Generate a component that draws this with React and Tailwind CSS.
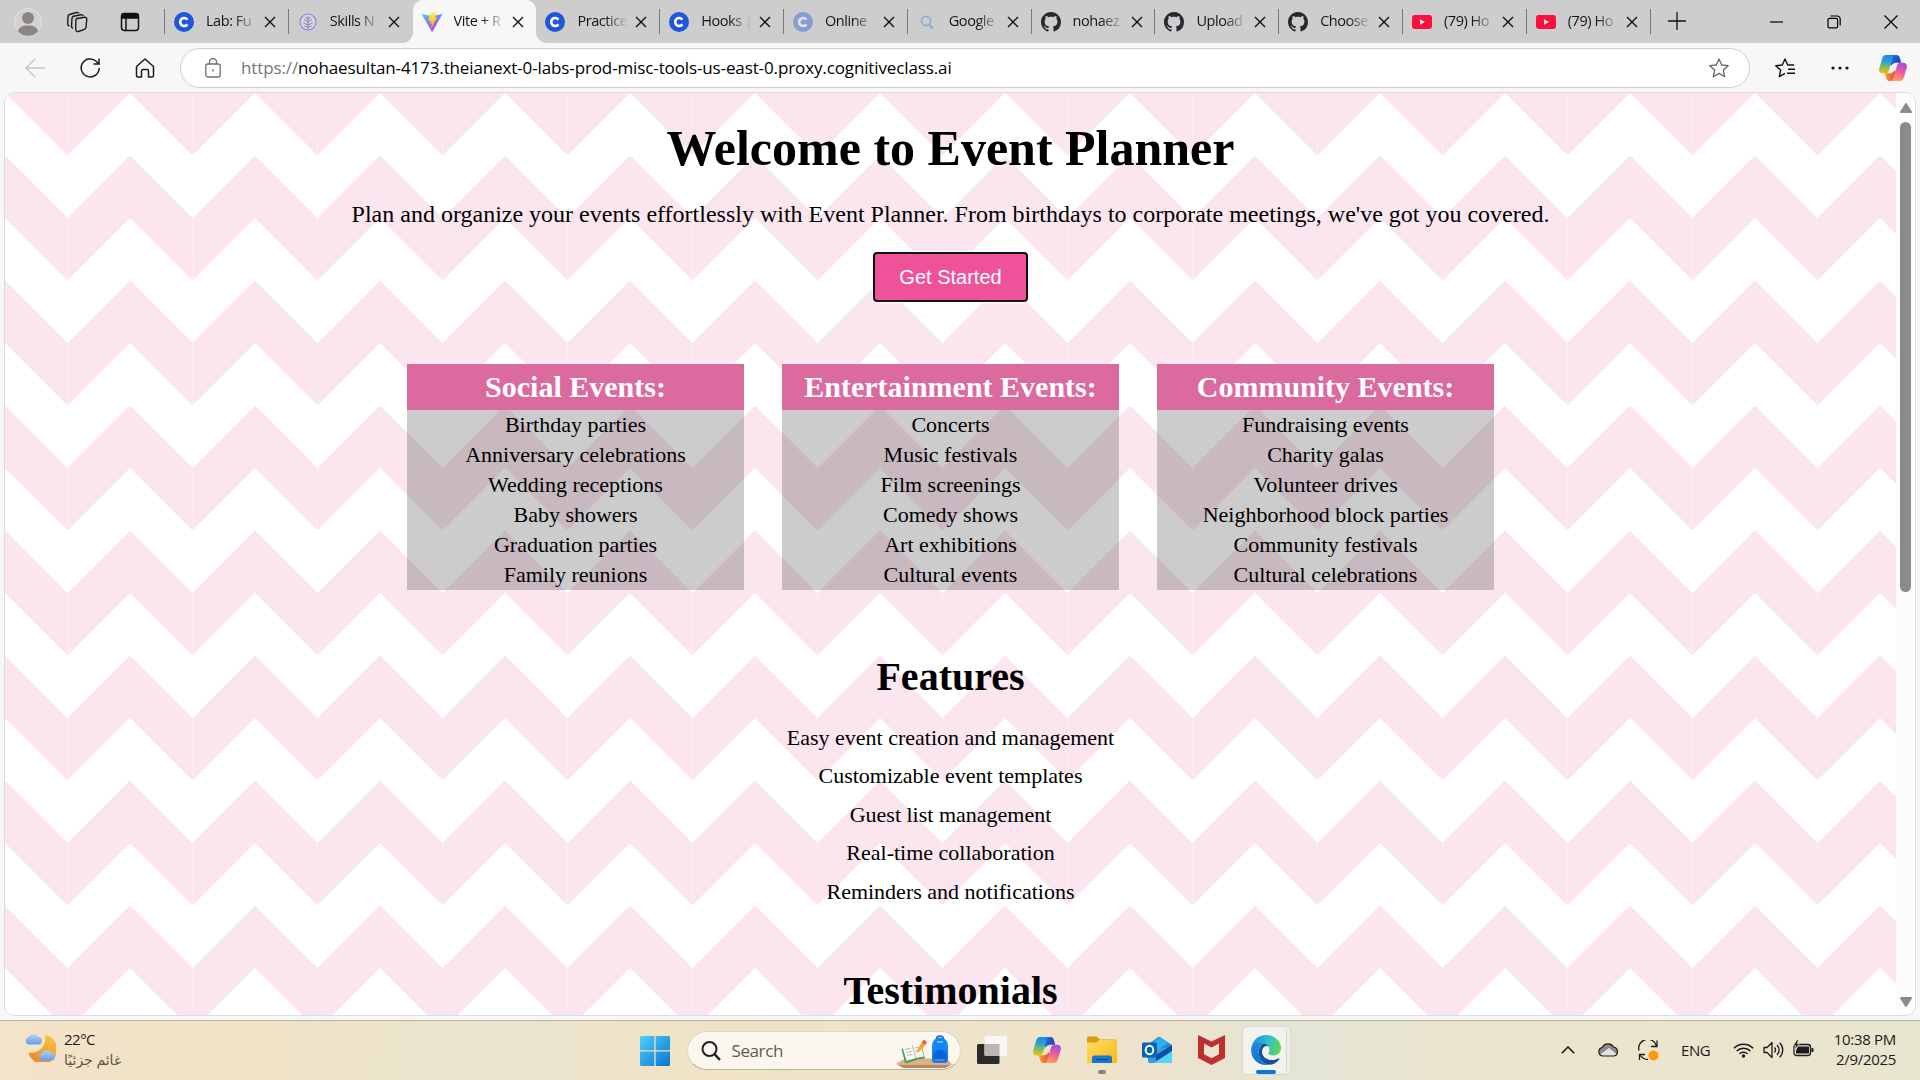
import React from "react";

const tabs = [
  { icon: "c", title: "Lab: Fu" },
  { icon: "skills", title: "Skills N" },
  { icon: "vite", title: "Vite + R" },
  { icon: "c", title: "Practice" },
  { icon: "c", title: "Hooks |" },
  { icon: "cFaded", title: "Online" },
  { icon: "search", title: "Google" },
  { icon: "github", title: "nohaez" },
  { icon: "github", title: "Upload" },
  { icon: "github", title: "Choose" },
  { icon: "youtube", title: "(79) Ho" },
  { icon: "youtube", title: "(79) Ho" },
];

const activeTab = 2;

const eventCards = [
  {
    title: "Social Events:",
    items: ["Birthday parties", "Anniversary celebrations", "Wedding receptions", "Baby showers", "Graduation parties", "Family reunions"],
  },
  {
    title: "Entertainment Events:",
    items: ["Concerts", "Music festivals", "Film screenings", "Comedy shows", "Art exhibitions", "Cultural events"],
  },
  {
    title: "Community Events:",
    items: ["Fundraising events", "Charity galas", "Volunteer drives", "Neighborhood block parties", "Community festivals", "Cultural celebrations"],
  },
];

const features = [
  "Easy event creation and management",
  "Customizable event templates",
  "Guest list management",
  "Real-time collaboration",
  "Reminders and notifications",
];

function CIcon({ faded }) {
  return (
    <svg viewBox="0 0 20 20" className={faded ? "size-5 shrink-0 opacity-40" : "size-5 shrink-0"}>
      <circle cx="10" cy="10" r="10" fill="#1f57d8" />
      <path d="M13.4 7.6A4 4 0 1 0 13.4 12.4" fill="none" stroke="#fff" strokeWidth="2.6" />
    </svg>
  );
}

function TabIcon({ kind }) {
  if (kind === "c") return <CIcon />;
  if (kind === "cFaded") return <CIcon faded />;
  if (kind === "skills")
    return (
      <svg viewBox="0 0 20 20" className="size-5 shrink-0" fill="none" stroke="#8f7fd0" strokeWidth="1.1">
        <circle cx="10" cy="10" r="8" fill="#d9d3ea" />
        <g stroke="#8b86a6" strokeWidth="1">
          <path d="M10 4v13M10 7L7.5 5.5M10 7l2.500-1.500M10 10L6 7.500M10 10l4-2.500M10 13l-4.500-2M10 13l4.500-2M10 15.500L6.500 14M10 15.500l3.500-1.500" />
        </g>
      </svg>
    );
  if (kind === "vite")
    return (
      <svg viewBox="0 0 20 20" className="size-5 shrink-0">
        <defs>
          <linearGradient id="viteBody" x1="0" y1="0" x2="0.6" y2="1">
            <stop offset="0" stopColor="#41d1ff" />
            <stop offset="1" stopColor="#bd34fe" />
          </linearGradient>
          <linearGradient id="viteBolt" x1="0" y1="0" x2="0" y2="1">
            <stop offset="0" stopColor="#ffea83" />
            <stop offset="0.3" stopColor="#ffdd35" />
            <stop offset="1" stopColor="#ffa800" />
          </linearGradient>
        </defs>
        <path d="M19.900 3L10.600 19.500a.5.5 0 0 1-.9 0L.1 3a.5.5 0 0 1 .6-.8L10 3.900l9.300-1.700a.5.5 0 0 1 .6.8z" fill="url(#viteBody)" />
        <path d="M14.300.3L7.500 1.600a.3.300 0 0 0-.2.300l-.5 7c0 .2.200.3.300.3l2-.4-.6 2.800c0 .2.100.4.300.3l1.200-.4-1 4.500c0 .3.400.5.500.2l5.400-10.600a.3.300 0 0 0-.3-.4l-2 .4L14.600.7a.3.300 0 0 0-.3-.4z" fill="url(#viteBolt)" />
      </svg>
    );
  if (kind === "search")
    return (
      <svg viewBox="0 0 20 20" className="size-5 shrink-0" fill="none" stroke="#8eadd3" strokeWidth="1.700">
        <circle cx="9" cy="9" r="4.600" />
        <path d="M12.300 12.500l3.500 4.200" strokeWidth="2.200" />
      </svg>
    );
  if (kind === "github")
    return (
      <svg viewBox="0 0 16 16" className="size-5 shrink-0" fill="#24292f">
        <path d="M8 0C3.580 0 0 3.580 0 8c0 3.540 2.290 6.530 5.470 7.590.4.070.55-.17.55-.38 0-.19-.01-.82-.01-1.490-2.010.37-2.530-.49-2.690-.94-.09-.23-.48-.94-.82-1.130-.28-.15-.68-.52-.01-.53.63-.01 1.080.58 1.230.82.72 1.210 1.870.87 2.330.66.07-.52.28-.87.51-1.070-1.780-.2-3.640-.89-3.640-3.950 0-.87.31-1.590.82-2.150-.08-.2-.36-1.020.08-2.120 0 0 .67-.21 2.200.82.64-.18 1.320-.27 2-.27s1.360.09 2 .27c1.530-1.040 2.200-.82 2.200-.82.44 1.100.16 1.920.08 2.120.51.56.82 1.270.82 2.150 0 3.070-1.870 3.750-3.650 3.950.29.25.54.73.54 1.480 0 1.070-.01 1.930-.01 2.200 0 .21.15.46.55.38A8.010 8.010 0 0 0 16 8c0-4.420-3.580-8-8-8z" />
      </svg>
    );
  return (
    <svg viewBox="0 0 20 20" className="size-5 shrink-0">
      <rect y="3" width="20" height="14" rx="3" fill="#fb0f3b" />
      <path d="M8 7.200v5.600l4.800-2.800z" fill="#fff" />
    </svg>
  );
}

function Tab({ tab, active, divider }) {
  return (
    <div
      className={
        active
          ? "relative flex h-full w-[123.8px] shrink-0 items-center rounded-t-[10px] bg-[#f7f7f7] pl-[9px]"
          : "relative flex h-full w-[123.8px] shrink-0 items-center pl-[9px]"
      }
    >
      {active && (
        <>
          <span className="absolute bottom-0 -left-[10px] size-[10px] bg-[radial-gradient(circle_at_0_0,transparent_9.500px,#f7f7f7_10px)]" />
          <span className="absolute -right-[10px] bottom-0 size-[10px] bg-[radial-gradient(circle_at_100%_0,transparent_9.500px,#f7f7f7_10px)]" />
        </>
      )}
      <TabIcon kind={tab.icon} />
      <div className="mb-[2px] ml-3 w-[54px] whitespace-nowrap font-['Open_Sans',sans-serif] text-[14.500px] tracking-[-0.450px] text-[#151515] [mask-image:linear-gradient(to_right,#000_28px,transparent_51px)]">
        {tab.title}
      </div>
      <svg viewBox="0 0 12 12" className="ml-[4px] size-3 shrink-0" fill="none" stroke="#111" strokeWidth="1.400">
        <path d="M1 1l10 10M11 1L1 11" />
      </svg>
      {divider && <span className="absolute top-[9px] right-0 h-[25px] w-px bg-[#777]" />}
    </div>
  );
}

function CopilotIcon({ className, id }) {
  return (
    <svg viewBox="0 0 28 26" className={className}>
      <defs>
        <linearGradient id={id + "a"} x1="0.400" y1="0" x2="0.300" y2="1">
          <stop offset="0" stopColor="#1f86ee" />
          <stop offset="0.350" stopColor="#2b9fd6" />
          <stop offset="0.650" stopColor="#7dbf5a" />
          <stop offset="1" stopColor="#f2c500" />
        </linearGradient>
        <linearGradient id={id + "b"} x1="0.700" y1="0" x2="0.400" y2="1">
          <stop offset="0" stopColor="#a04de8" />
          <stop offset="0.500" stopColor="#ec5c9c" />
          <stop offset="1" stopColor="#ffa05c" />
        </linearGradient>
        <linearGradient id={id + "c"} x1="0" y1="0" x2="1" y2="0.300">
          <stop offset="0" stopColor="#1d78e0" />
          <stop offset="1" stopColor="#2441c4" />
        </linearGradient>
        <linearGradient id={id + "d"} x1="0" y1="0" x2="1" y2="0">
          <stop offset="0" stopColor="#f5a030" />
          <stop offset="1" stopColor="#e8483c" />
        </linearGradient>
      </defs>
      <path d="M12 0h5.500c2 0 2.800 1.200 3.400 3l1.300 4.700h-3.500c-2.800 0-4.700.300-6.200 2.800L11 9z" fill={"url(#" + id + "c)"} />
      <path d="M16 26h-5.500c-2 0-2.800-1.200-3.400-3l-1.300-4.700h3.500c2.800 0 4.700-.3 6.200-2.800L17 17z" fill={"url(#" + id + "d)"} />
      <path d="M7.500 0H17c-2 0-2.800 1.500-3.400 3.500L10 15.500c-.6 2-1.700 3-3.700 3H4c-3 0-4.600-2-3.700-5L3 4c.8-2.700 2-4 4.500-4z" fill={"url(#" + id + "a)"} />
      <path d="M20.500 26H11c2 0 2.800-1.500 3.400-3.500L18 10.500c.6-2 1.700-2.800 3.700-2.800H24c3 0 4.600 2 3.700 5L25 22c-.8 2.700-2 4-4.500 4z" fill={"url(#" + id + "b)"} />
    </svg>
  );
}

function TabStrip() {
  return (
    <div className="flex h-[43px] items-center bg-[#cdcdcd]">
      <svg viewBox="0 0 28 28" className="ml-[14px] size-7">
        <circle cx="14" cy="14" r="13.500" fill="#d4d2ce" stroke="#e2e0dc" />
        <circle cx="14" cy="10" r="6" fill="#8b8683" />
        <path d="M4 23.500c1-5 5-6 10-6s9 1 10 6a14 14 0 0 1-20 0z" fill="#8b8683" />
      </svg>
      <svg viewBox="0 0 22 22" className="ml-[24px] size-[22px]" fill="none" stroke="#1b1b1b" strokeWidth="1.400" strokeLinejoin="round">
        <path d="M11 7.500l7.500-1.300a2 2 0 0 1 2.300 1.800l-.8 8.500a2 2 0 0 1-1.600 1.800l-6 2.200a2 2 0 0 1-2.700-1.900l.2-9.200a2 2 0 0 1 1.100-1.900z" />
        <path d="M7 17.200a2 2 0 0 1-1.500-2l.5-8a2 2 0 0 1 1.500-1.900L15 3.700a2 2 0 0 1 2.300 1.300M3.500 15a2 2 0 0 1-1.800-2L2 5.500a2 2 0 0 1 1.500-2L10.500 1.500a2 2 0 0 1 2.300 1" />
      </svg>
      <svg viewBox="0 0 20 20" className="ml-[32px] size-5" fill="none" stroke="#111" strokeWidth="1.500">
        <rect x="1.500" y="1.500" width="17" height="17" rx="3" />
        <path d="M2 2.500h16v3.500H2z" fill="#111" />
        <path d="M6 6v12" />
      </svg>
      <span className="ml-[24px] h-[25px] w-px bg-[#777]" />
      <div className="flex h-full">
        {tabs.map((tab, i) => (
          <Tab key={i} tab={tab} active={i === activeTab} divider={i !== activeTab - 1 && i !== activeTab} />
        ))}
      </div>
      <svg viewBox="0 0 18 18" className="mb-[2px] ml-[17px] size-[18px]" fill="none" stroke="#111" strokeWidth="1.300">
        <path d="M9 0v18M0 9h18" />
      </svg>
      <div className="ml-auto flex items-center gap-[43px] pr-[22px] text-black">
        <svg viewBox="0 0 14 14" className="size-[14px]" fill="none" stroke="currentColor" strokeWidth="1.200">
          <path d="M0 7h13" />
        </svg>
        <svg viewBox="0 0 14 14" className="size-[14px]" fill="none" stroke="currentColor" strokeWidth="1.200">
          <rect x="1" y="3.300" width="9.600" height="9.600" rx="1.500" />
          <path d="M3.500 1h6.700A3 3 0 0 1 13.200 4v6.500" />
        </svg>
        <svg viewBox="0 0 14 14" className="size-[14px]" fill="none" stroke="currentColor" strokeWidth="1.200">
          <path d="M.5.5l13 13M13.500.5l-13 13" />
        </svg>
      </div>
    </div>
  );
}

function Toolbar() {
  return (
    <div className="flex h-[49px] items-center bg-[#f7f7f7]">
      <svg viewBox="0 0 20 20" className="ml-[25px] size-5" fill="none" stroke="#c6c6c6" strokeWidth="1.400">
        <path d="M20 10H1.500M10 1L1 10l9 9" />
      </svg>
      <svg viewBox="0 0 20 20" className="ml-[35px] size-5" fill="none" stroke="#1b1b1b" strokeWidth="1.500">
        <path d="M19.200 10a9 9 0 1 1-3-6.800l2.500 2.500M19 .5v5.500h-5.500" />
      </svg>
      <svg viewBox="0 0 20 20" className="ml-[35px] size-5" fill="none" stroke="#1b1b1b" strokeWidth="1.500" strokeLinejoin="round">
        <path d="M1.500 8.500L10 1l8.500 7.500v9a1.500 1.500 0 0 1-1.500 1.500h-3.500v-6a1.500 1.500 0 0 0-1.500-1.500H8A1.500 1.500 0 0 0 6.500 13v6H3a1.500 1.500 0 0 1-1.500-1.500z" />
      </svg>
      <div className="ml-[25px] flex h-10 w-[1570px] items-center rounded-full border border-[#cfcfcf] bg-white">
        <svg viewBox="0 0 16 20" className="ml-[24px] h-5 w-4" fill="none" stroke="#707070" strokeWidth="1.300">
          <rect x="0.800" y="6" width="14.400" height="13" rx="2" />
          <path d="M4.500 6V4a3.500 3.500 0 0 1 7 0v2" />
          <circle cx="8" cy="12.500" r="1" fill="#707070" stroke="none" />
        </svg>
        <span className="ml-[20px] whitespace-nowrap font-['Open_Sans',sans-serif] text-[17px] tracking-[-0.120px] text-black">
          <span className="text-[#767676]">https://</span>nohaesultan-4173.theianext-0-labs-prod-misc-tools-us-east-0.proxy.cognitiveclass.ai
        </span>
        <svg viewBox="0 0 20 20" className="mr-[20px] ml-auto size-5" fill="none" stroke="#666" strokeWidth="1.300" strokeLinejoin="round">
          <path d="M10 1l2.700 6 6.500.7-4.900 4.400 1.400 6.600L10 15.400l-5.700 3.300 1.400-6.600L.8 7.700l6.500-.7z" />
        </svg>
      </div>
      <svg viewBox="0 0 20 20" className="ml-[25px] size-5" fill="none" stroke="#111" strokeWidth="1.400" strokeLinejoin="round">
        <path d="M10 15.400l-5.700 3.300 1.400-6.600L.8 7.700l6.500-.7L10 1l2.700 6h6.500" />
        <path d="M13 11.300h7M12 15.300h8" />
      </svg>
      <svg viewBox="0 0 18 4" className="ml-[36px] h-1 w-[18px]" fill="#111">
        <circle cx="2" cy="2" r="1.600" />
        <circle cx="9" cy="2" r="1.600" />
        <circle cx="16" cy="2" r="1.600" />
      </svg>
      <CopilotIcon id="cpTop" className="ml-[30px] h-[26px] w-7" />
    </div>
  );
}

function EventCard({ card }) {
  return (
    <div className="w-[337px] bg-black/20">
      <h3 className="h-[46px] bg-[#db6a9e] text-[30px] leading-[45px] font-bold text-white">{card.title}</h3>
      <ul className="text-[22px] leading-[30px]">
        {card.items.map((item) => (
          <li key={item}>{item}</li>
        ))}
      </ul>
    </div>
  );
}

function EventPage() {
  return (
    <main className="flex h-full w-[1891px] shrink-0 flex-col items-center overflow-hidden bg-white bg-[linear-gradient(135deg,#fbe6ef_25%,transparent_25%),linear-gradient(225deg,#fbe6ef_25%,transparent_25%),linear-gradient(315deg,#fbe6ef_25%,transparent_25%),linear-gradient(45deg,#fbe6ef_25%,transparent_25%)] bg-[length:125px_125px] bg-[position:-62.5px_0,-62.5px_0,0_0,0_0] text-center font-['Liberation_Serif','Times_New_Roman',serif] text-black">
      <h1 className="mt-[26px] shrink-0 text-[50px] leading-[58px] font-bold">Welcome to Event Planner</h1>
      <p className="mt-[23px] shrink-0 text-[24px] leading-7">
        Plan and organize your events effortlessly with Event Planner. From birthdays to corporate meetings, we've got you covered.
      </p>
      <button className="mt-[24px] h-[50px] w-[155px] shrink-0 rounded-[4px] border-2 border-[#101010] bg-[#ee5399] font-['Liberation_Sans',Arial,sans-serif] text-[20px] text-white shadow-[0_0_0_1px_#fff]">
        Get Started
      </button>
      <section className="mt-[62px] flex shrink-0 gap-[38px]">
        {eventCards.map((card) => (
          <EventCard key={card.title} card={card} />
        ))}
      </section>
      <h2 className="mt-[64px] shrink-0 text-[40px] leading-[46px] font-bold">Features</h2>
      <ul className="mt-[18.500px] shrink-0 text-[22px] leading-[38.500px]">
        {features.map((item) => (
          <li key={item}>{item}</li>
        ))}
      </ul>
      <h2 className="mt-[56.500px] shrink-0 text-[40px] leading-[46px] font-bold">Testimonials</h2>
    </main>
  );
}

function Scrollbar() {
  return (
    <div className="flex h-full flex-1 flex-col items-center bg-[#fcfcfc] pt-[10px] pb-[8px]">
      <svg viewBox="0 0 12 10" className="h-[10px] w-3" fill="#8b8b8b">
        <path d="M5 .8a1.200 1.200 0 0 1 2 0l4.800 7.600a1 1 0 0 1-.9 1.600H1.100a1 1 0 0 1-.9-1.600z" />
      </svg>
      <div className="mt-[9px] h-[470px] w-[11px] rounded-full bg-[#8b8b8b]" />
      <svg viewBox="0 0 12 10" className="mt-auto h-[10px] w-3 rotate-180" fill="#8b8b8b">
        <path d="M5 .8a1.200 1.200 0 0 1 2 0l4.800 7.600a1 1 0 0 1-.9 1.600H1.100a1 1 0 0 1-.9-1.600z" />
      </svg>
    </div>
  );
}

function Cloud({ id }) {
  return (
    <>
      <defs>
        <linearGradient id={id} x1="0" y1="0" x2="0" y2="1">
          <stop offset="0" stopColor="#b4d2f8" />
          <stop offset="1" stopColor="#6a9be8" />
        </linearGradient>
      </defs>
      <path d="M4 11.500a4 3.800 0 0 1-.2-7.400A5 4.600 0 0 1 13 3.800a4 3.900 0 0 1 .8 7.700z" fill={"url(#" + id + ")"} />
    </>
  );
}

function Taskbar() {
  return (
    <footer className="flex h-[60px] items-start border-t border-[#b7b29f] bg-[linear-gradient(95deg,#f3e3c9_0%,#f1e3c6_14%,#ebe5cd_22%,#ebe5cf_27%,#f0e3c5_36%,#eee3cb_50%,#efe2cb_58%,#e4e5d6_68%,#eae4cd_76%,#ece4cc_86%,#e8e5ce_100%)] font-['Open_Sans',sans-serif]">
      <svg viewBox="0 0 31 29" className="mt-[12px] ml-[25px] h-[29px] w-[31px]">
        <defs>
          <linearGradient id="moon" x1="0.800" y1="0" x2="0.300" y2="1">
            <stop offset="0" stopColor="#f7c845" />
            <stop offset="1" stopColor="#f58220" />
          </linearGradient>
        </defs>
        <path d="M20 2a14.500 14.500 0 1 1-16.500 17.500c9 2 19-6 16.500-17.500z" fill="url(#moon)" />
        <Cloud id="cloudBack" />
        <g transform="translate(13 16)">
          <Cloud id="cloudFront" />
        </g>
      </svg>
      <div className="mt-[8px] ml-[8px] w-[120px]">
        <div className="text-[15px] leading-5 tracking-[-0.5px] text-[#1a1a1a]">22°C</div>
        <div className="text-left font-['Noto_Sans','DejaVu_Sans',sans-serif] text-[14px] leading-[22px] text-[#5c5549]" dir="auto">
          <span className="inline-block">غائم جزئيًا</span>
        </div>
      </div>

      <svg viewBox="0 0 30 30" className="mt-[15px] ml-[455.500px] size-[30px]">
        <defs>
          <linearGradient id="win" x1="0" y1="0" x2="1" y2="1">
            <stop offset="0" stopColor="#4fd0f8" />
            <stop offset="1" stopColor="#0a74d2" />
          </linearGradient>
        </defs>
        <path d="M1.500 0h12.800v14.300H0V1.500A1.500 1.500 0 0 1 1.500 0zM15.600 0h12.900A1.500 1.500 0 0 1 30 1.500v12.800H15.600zM0 15.600h14.300V30H1.500A1.500 1.500 0 0 1 0 28.500zM15.600 15.600H30v12.900a1.500 1.500 0 0 1-1.500 1.500H15.600z" fill="url(#win)" />
      </svg>

      <div className="mt-[10px] ml-[17px] flex h-[39px] w-[274px] items-center rounded-full border border-[#e1d8c4] border-b-[#b9b2a2] bg-[#fbf7ef]">
        <svg viewBox="0 0 20 20" className="ml-[13px] size-5" fill="none" stroke="#222" strokeWidth="2">
          <circle cx="8.500" cy="8" r="7" />
          <path d="M13.500 13.200l5.500 5.800" strokeWidth="2.400" />
        </svg>
        <span className="ml-[11px] text-[17px] tracking-[-0.400px] text-[#5d5b57]">Search</span>
        <svg viewBox="0 0 58 34" className="mr-[6px] ml-auto h-[34px] w-[58px]">
          <path d="M0 30c3-2 7-5.500 12-5.500h32c6 0 10 2.500 12 6L48 34H8z" fill="#dcb185" />
          <path d="M2 31h53l-6 3H8z" fill="#b98a62" />
          <path d="M5.500 15l11-3 9-1 3.500 13.500-8 1-10 3.500-2-.5z" fill="#3f9a52" />
          <path d="M6.500 13.500l9.500-2.500 8.500-1 3.500 12.500-8 1.500-9.500 3z" fill="#f7f7f4" />
          <path d="M16 11l4 13M9 15.500l5.500-1.200M10 18.500l5.500-1.200M11 21.500l5.500-1.200M18.500 14l5-.8M19.500 17l5-.8" stroke="#a9b2b0" strokeWidth="0.900" fill="none" />
          <path d="M21 16.500l4.500-8 3.500 3-5.500 6-2.800 1z" fill="#f6a623" />
          <path d="M25.500 8.500l2.500-3 3 2.500-2 3.500z" fill="#ee5b5b" />
          <path d="M40.500 5a3.500 3 0 0 1 7 0" fill="none" stroke="#1260c9" strokeWidth="1.500" />
          <path d="M36 11.500a8 8 0 0 1 16 0V26a3 3 0 0 1-3 3H39a3 3 0 0 1-3-3z" fill="#1386f5" />
          <path d="M37.500 21a6.500 5 0 0 1 13 0v4.500a2 2 0 0 1-2 2h-9a2 2 0 0 1-2-2z" fill="#0b63d8" />
          <path d="M41 8h6" stroke="#7cc6ff" strokeWidth="1.500" />
          <path d="M38.500 26h10" stroke="#8f8ff0" strokeWidth="1.200" />
        </svg>
      </div>

      <svg viewBox="0 0 30 28" className="mt-[15px] ml-[16px] h-7 w-[30px]">
        <rect y="8" width="22.500" height="20" rx="1.500" fill="#2c2b29" />
        <rect x="7.500" width="22.500" height="20" rx="1.500" fill="#f8f7f5" />
        <path d="M7.500 8h15v12H9a1.500 1.500 0 0 1-1.500-1.500z" fill="#b9b7b4" />
      </svg>
      <CopilotIcon id="cpTask" className="mt-[16px] ml-[26px] h-[26px] w-7" />
      <div className="mt-[15px] ml-[26px] flex w-[30px] flex-col items-center">
        <svg viewBox="0 0 30 28" className="h-7 w-[30px]">
          <defs>
            <linearGradient id="folder" x1="0" y1="0" x2="1" y2="1">
              <stop offset="0" stopColor="#ffdc6b" />
              <stop offset="1" stopColor="#f9b912" />
            </linearGradient>
          </defs>
          <path d="M0 2a1.500 1.500 0 0 1 1.500-1.500h8L13 3.500h15.500A1.500 1.500 0 0 1 30 5v8H0z" fill="#d99e0c" />
          <path d="M0 6.500h9.500l3-2.500h16A1.500 1.500 0 0 1 30 5.500v20a1.500 1.500 0 0 1-1.500 1.500h-27A1.500 1.500 0 0 1 0 25.500z" fill="url(#folder)" />
          <path d="M5 27v-5a2.500 2.500 0 0 1 2.500-2.500h15A2.500 2.500 0 0 1 25 22v5z" fill="#1478cc" />
          <path d="M9 23.500h12" stroke="#0a4f96" strokeWidth="1.300" />
        </svg>
        <span className="mt-[6px] h-1 w-2 rounded-full bg-[#85817a]" />
      </div>

      <svg viewBox="0 0 30 28" className="mt-[15px] ml-[25px] h-7 w-[30px]">
        <path d="M5 9L16 1.200a2 2 0 0 1 2.200 0L30 9v4L18 22H5z" fill="#1a8fdf" />
        <path d="M6 12h24v13a2 2 0 0 1-2 2H8a2 2 0 0 1-2-2z" fill="#2f9fe4" />
        <path d="M30 9L14 19v6L30 16z" fill="#0d4fa3" />
        <path d="M12 27l18-12v10a2 2 0 0 1-2 2z" fill="#50d5fb" />
        <path d="M9 8l8-6.500L26 7 14 15z" fill="#2fb1ee" />
        <rect y="6.500" width="15" height="15" rx="1.500" fill="#0763b8" />
        <ellipse cx="7.500" cy="14" rx="3.800" ry="4.300" fill="none" stroke="#fff" strokeWidth="2" />
      </svg>

      <svg viewBox="0 0 27 30" className="mt-[14px] ml-[26px] h-[30px] w-[27px]">
        <path d="M0 0l13.500 6.500L27 0v23l-13.500 7L0 23zM6 8.500v10.700l7.500 4 7.500-4V8.500l-7.500 4z" fill="#c22d2e" fillRule="evenodd" />
      </svg>

      <div className="mt-[5px] ml-[17.500px] flex h-[49px] w-[49px] rounded-[5px] border border-[#d9d9cf] bg-[#eff0e9]">
        <div className="flex h-full w-[44px] flex-col items-center rounded-[5px] border-r border-[#d5d5cc] bg-[#f3f3ee] pt-[8px] pl-[3px]">
          <svg viewBox="0 0 30 30" className="size-[30px] shrink-0">
            <defs>
              <linearGradient id="edgeTop" x1="0" y1="0.300" x2="1" y2="0.500">
                <stop offset="0" stopColor="#1b8fdc" />
                <stop offset="0.550" stopColor="#2fbfd0" />
                <stop offset="1" stopColor="#63d94d" />
              </linearGradient>
              <linearGradient id="edgeLeft" x1="0" y1="0" x2="0.500" y2="1">
                <stop offset="0" stopColor="#1c8ae0" />
                <stop offset="1" stopColor="#1272ca" />
              </linearGradient>
            </defs>
            <path d="M.2 14.500C.6 6 7 0 15 0c9 0 15 6.500 15 12.800 0 5-3.700 7.700-7.800 7.700-3.400 0-4.900-1.200-4.900-2.200 0-.8 1.200-1.200 1.200-3.500C18.500 11 15 8.500 11.500 8.500 6 8.500 1.800 11.500.2 14.500z" fill="url(#edgeTop)" />
            <path d="M.1 14.500C1.500 10 6.500 7 11.500 8.500c-2 1.500-3.800 4.500-3.800 8.500 0 7 5 12 10.500 12.500-1 .3-2 .5-3.200.5C6.500 30-.3 23 .1 14.500z" fill="url(#edgeLeft)" />
            <path d="M11.800 13.500c-3 7 3.500 11.500 9 11.500 3 0 5.500-1 7-1.800.5-.2.800.2.500.7C26 27.500 22 30 18 29.600 12 29 7.700 23.500 7.700 17.500c0-3.500 1.500-6.500 3.800-9 3 .1 5 1.300 6 2.800-2.500-.8-4.700.2-5.700 2.200z" fill="#164f9e" />
          </svg>
          <span className="mt-[5px] h-1 w-5 shrink-0 rounded-full bg-[#0a78d6]" />
        </div>
      </div>

      <svg viewBox="0 0 14 8" className="mt-[25px] ml-[270px] h-2 w-[14px]" fill="none" stroke="#1b1b1b" strokeWidth="1.600">
        <path d="M.8 7.200L7 1l6.200 6.200" />
      </svg>
      <svg viewBox="0 0 21 15" className="mt-[21px] ml-[23px] h-[15px] w-[21px]">
        <path d="M5 14a4.300 4.300 0 0 1-.7-8.500A6.300 6.300 0 0 1 15.500 5 4.600 4.600 0 0 1 16 14z" fill="#8a8a8a" />
        <path d="M2 12.500L11 6l8 6.500c-1 1.200-2 1.500-3 1.500H5c-1.200 0-2.200-.5-3-1.500z" fill="#e3e3e3" />
        <path d="M5 14a4.300 4.300 0 0 1-.7-8.500A6.300 6.300 0 0 1 15.500 5 4.600 4.600 0 0 1 16 14z" fill="none" stroke="#1b1b1b" strokeWidth="1.200" />
      </svg>
      <svg viewBox="0 0 21 21" className="mt-[19px] ml-[19px] size-[21px]" fill="none" stroke="#1b1b1b" strokeWidth="1.300">
        <path d="M1 10.500A9 9 0 0 1 18.500 6M19 .5V6.500h-6M1.500 20v-5.500h5.500M2.500 15.500A9 9 0 0 0 10 19.500" />
        <circle cx="15.500" cy="15.500" r="5" fill="#ff9a0a" stroke="none" />
      </svg>
      <span className="mt-[19px] ml-[22px] w-[52px] text-[15px] leading-5 tracking-[-0.450px] text-[#1b1b1b]">ENG</span>
      <svg viewBox="0 0 21 16" className="mt-[21px] h-4 w-[21px]" fill="none" stroke="#1b1b1b" strokeWidth="1.500">
        <path d="M.8 6.200a13.700 13.700 0 0 1 19.400 0M3.600 9a9.800 9.800 0 0 1 13.800 0M6.500 11.800a5.700 5.700 0 0 1 8 0" />
        <circle cx="10.500" cy="14" r="1.700" fill="#1b1b1b" stroke="none" />
      </svg>
      <svg viewBox="0 0 21 18" className="mt-[20px] ml-[9px] h-[18px] w-[21px]" fill="none" stroke="#1b1b1b" strokeWidth="1.300" strokeLinejoin="round">
        <path d="M1 6.500h3L9 1.500v15l-5-5H1z" />
        <path d="M11.500 6.500a3.500 3.500 0 0 1 0 5M14 4a7 7 0 0 1 0 10M16.700 1.700a10.300 10.300 0 0 1 0 14.600" />
      </svg>
      <svg viewBox="0 0 21 17" className="mt-[19px] ml-[9px] h-[17px] w-[21px]">
        <rect x="1" y="4.500" width="16.500" height="11" rx="2.500" fill="none" stroke="#1b1b1b" strokeWidth="1.300" />
        <path d="M5 6.500h11v7H3v-3z" fill="#1b1b1b" />
        <path d="M18.500 8h1a1 1 0 0 1 1 1v2a1 1 0 0 1-1 1h-1z" fill="#1b1b1b" />
        <path d="M4 0L.5 5.500h2.300L1.500 9.500 6.500 4H4L5.500 0z" fill="#1b1b1b" stroke="#ece5cd" strokeWidth="0.500" />
      </svg>
      <div className="mt-[8px] mr-[24px] ml-auto text-right text-[15px] leading-5 tracking-[-0.300px] whitespace-nowrap text-[#1b1b1b]">
        <div>10:38 PM</div>
        <div>2/9/2025</div>
      </div>
    </footer>
  );
}

export default function App() {
  return (
    <div className="flex h-[1080px] w-[1920px] flex-col overflow-hidden bg-[#f7f7f7]">
      <TabStrip />
      <Toolbar />
      <div className="h-[928px] px-[4px] pb-[4px]">
        <div className="flex h-full overflow-hidden rounded-[10px] border border-[#dcdcdc] bg-white">
          <EventPage />
          <Scrollbar />
        </div>
      </div>
      <Taskbar />
    </div>
  );
}
